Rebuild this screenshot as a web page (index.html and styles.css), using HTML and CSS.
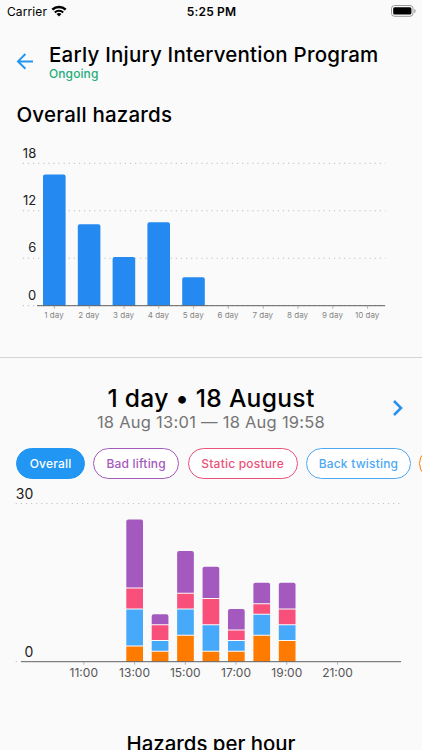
FILE: index.html
```html
<!DOCTYPE html>
<html lang="en">
<head>
    <meta charset="UTF-8">
    <meta name="viewport" content="width=device-width, initial-scale=1.0">
    <title>Early Injury Intervention Program</title>
    <link rel="stylesheet" href="styles.css">
</head>
<body>

    <!-- Status bar -->
    <div class="status-bar">
        <div class="carrier">
            <span>Carrier</span>
            <svg width="16" height="12" viewBox="0 0 16 12">
                <path d="M1.3 4.6a9.6 9.6 0 0 1 13.4 0" fill="none" stroke="#000" stroke-width="2.5"/>
                <path d="M3.8 7.4a6 6 0 0 1 8.4 0" fill="none" stroke="#000" stroke-width="2.1"/>
                <path d="M8 11.6 5.5 9.1a3.6 3.6 0 0 1 5 0z"/>
            </svg>
        </div>
        <span class="clock">5:25 PM</span>
        <svg class="battery" width="25" height="12" viewBox="0 0 25 12">
            <rect x=".5" y=".5" width="21.5" height="10.8" rx="3" fill="none" stroke="#999"/>
            <rect x="2.2" y="2.2" width="18.2" height="7.4" rx="1.5"/>
            <path d="M23.3 4v4c1-.4 1.3-1.2 1.3-2s-.3-1.6-1.3-2z" fill="#999"/>
        </svg>
    </div>

    <header class="header">
        <svg class="back" width="18" height="18" viewBox="0 0 18 18">
            <path d="M17 9.4H2.4M9.4 2 2 9.4l7.4 7.4"/>
        </svg>
        <div>
            <h1>Early Injury Intervention Program</h1>
            <p class="status">Ongoing</p>
        </div>
    </header>

    <section class="overall">
        <h2>Overall hazards</h2>
        <svg id="days-chart" class="chart" width="422" height="190" viewBox="0 0 422 190"></svg>
    </section>

    <section class="day">
        <div class="day-header">
            <div>
                <h2 class="day-title">1 day • 18 August</h2>
                <p class="day-range">18 Aug 13:01 — 18 Aug 19:58</p>
            </div>
            <svg class="next" width="12" height="18" viewBox="0 0 12 18">
                <path d="M2 2l7 7-7 7"/>
            </svg>
        </div>

        <div class="chips">
            <button class="chip chip-overall">Overall</button>
            <button class="chip chip-lifting">Bad lifting</button>
            <button class="chip chip-posture">Static posture</button>
            <button class="chip chip-twisting">Back twisting</button>
            <button class="chip chip-next"></button>
        </div>

        <svg id="hours-chart" class="chart" width="422" height="206" viewBox="0 0 422 206"></svg>
    </section>

    <h2 class="per-hour">Hazards per hour</h2>

    <script>
        const line = (x1, y1, x2, y2, cls) => `<line x1="${x1}" y1="${y1}" x2="${x2}" y2="${y2}" class="${cls}"/>`;
        const label = (x, y, text, cls) => `<text x="${x}" y="${y}" class="${cls}">${text}</text>`;

        // bar with only the top corners rounded
        const bar = (x, y, w, bottom, r, cls) =>
            `<path class="${cls}" d="M${x} ${bottom}V${y + r}q0 ${-r} ${r} ${-r}h${w - 2 * r}q${r} 0 ${r} ${r}V${bottom}z"/>`;

        function drawDays() {
            const values = [16.6, 10.3, 6.15, 10.55, 3.6];
            const base = 165.7, unit = 7.91;
            let out = "";
            [0, 6, 12, 18].forEach(v => {
                const y = base - v * unit;
                out += line(22.8, y, 385.5, y, "grid");
                out += label(36.2, y - 5.8, v, "axis-value");
            });
            values.forEach((v, i) => {
                out += bar(43 + i * 34.8, base - v * unit, 22.6, base, 2, "bar");
            });
            out += line(37, base, 385, base, "axis");
            for (let i = 0; i < 10; i++) {
                const x = 54.4 + i * 34.8;
                out += line(x, base, x, base + 3, "tick");
                out += label(x - 0.4, base + 12.4, `${i + 1} day`, "day-label");
            }
            document.getElementById("days-chart").innerHTML = out;
        }

        function drawHours() {
            // orange, blue, pink, purple
            const stacks = [
                [3, 7, 4, 13],
                [2, 2, 3, 2],
                [5, 5, 3, 8],
                [2, 5, 5, 6],
                [2, 2, 2, 4],
                [5, 4, 2, 4],
                [4, 3, 3, 5]
            ];
            const colors = ["orange", "blue", "pink", "purple"];
            const base = 182.7, unit = 5.27;
            let out = line(15.7, base - 30 * unit, 399.5, base - 30 * unit, "grid");
            out += line(15.7, base, 21, base, "grid");
            out += label(33.3, base - 30 * unit - 5, 30, "axis-value large");
            out += label(33.3, base - 5, 0, "axis-value large");
            stacks.forEach((stack, i) => {
                const x = 126.3 + i * 25.42;
                let bottom = base;
                stack.forEach((v, n) => {
                    const top = bottom - v * unit;
                    out += bar(x, top + (n < 3 ? 0.5 : 0), 16.7, bottom - (n ? 0.5 : 0), n < 3 ? 0 : 2, colors[n]);
                    bottom = top;
                });
            });
            out += line(21, base, 401, base, "axis");
            for (let i = 0; i < 6; i++) {
                const x = 83.8 + i * 50.75;
                out += line(x, base, x, base + 3, "tick");
                out += label(x, base + 14.8, `${11 + i * 2}:00`, "hour-label");
            }
            document.getElementById("hours-chart").innerHTML = out;
        }

        drawDays();
        drawHours();
    </script>
</body>
</html>
```

FILE: styles.css
```css
* {
    box-sizing: border-box;
}

body {
    margin: 0;
    height: 750px;
    overflow: hidden;
    background-color: #fafafa;
    color: #000;
    font-family: Inter, "Liberation Sans", sans-serif;
}

h1, h2, p {
    margin: 0;
    font-weight: 500;
    white-space: nowrap;
}

svg {
    display: block;
    flex: none;
}

.status-bar {
    display: grid;
    grid-template-columns: 1fr auto 1fr;
    align-items: center;
    height: 22px;
    padding: 0 6px 0 7px;
    font-size: 12px;
}

.carrier {
    display: flex;
    align-items: center;
    gap: 4px;
    letter-spacing: 0.1px;
}

.clock {
    font-weight: 600;
    letter-spacing: 0.15px;
}

.battery {
    justify-self: end;
}

.header {
    display: flex;
    gap: 15px;
    height: 78px;
    padding: 21px 0 0 16px;
}

.back {
    margin-top: 9px;
    fill: none;
    stroke: #2196f3;
    stroke-width: 2;
}

h1 {
    font-size: 20.5px;
    line-height: 24px;
    letter-spacing: 0.22px;
}

.status {
    color: #1fad7b;
    font-size: 12px;
    line-height: 14px;
    letter-spacing: 0.1px;
}

.overall {
    height: 258px;
    border-bottom: 1px solid #d4d4d4;
}

.overall h2 {
    height: 40px;
    padding-left: 16.4px;
    font-size: 20.5px;
    line-height: 29px;
    letter-spacing: 0.2px;
}

.day-header {
    display: grid;
    height: 90px;
    padding-top: 25px;
    text-align: center;
}

.day-header > * {
    grid-area: 1 / 1;
}

.day-title {
    font-size: 24.6px;
    line-height: 30px;
    letter-spacing: 0.3px;
}

.day-range {
    color: #757575;
    font-size: 16.5px;
    font-weight: 400;
    line-height: 18px;
    letter-spacing: 0.25px;
}

.next {
    justify-self: end;
    margin: 16px 18px 0 0;
    fill: none;
    stroke: #2990ec;
    stroke-width: 2.6;
}

.chips {
    display: flex;
    gap: 8.2px;
    padding-left: 16.4px;
    overflow: hidden;
}

.chip {
    flex: none;
    height: 31px;
    padding: 0;
    border: 1px solid;
    border-radius: 16px;
    background-color: #fff;
    font: 500 12px Inter, "Liberation Sans", sans-serif;
    letter-spacing: 0.2px;
}

.chip-overall {
    width: 68.4px;
    border-color: #2196f3;
    background-color: #2196f3;
    color: #fff;
}

.chip-lifting {
    width: 86.5px;
    color: #a45abb;
}

.chip-posture {
    width: 110px;
    color: #eb5279;
}

.chip-twisting {
    width: 105.2px;
    color: #4ea8f1;
}

.chip-next {
    width: 100px;
    border-color: #ff7a00;
}

.chart text {
    fill: #212121;
}

.grid {
    stroke: #bdbdbd;
    stroke-dasharray: 1.2 3.9;
}

.axis {
    stroke: #616161;
}

.tick {
    stroke: #9e9e9e;
    stroke-width: 0.8;
}

.axis-value {
    font-size: 13px;
    text-anchor: end;
}

.axis-value.large {
    font-size: 14px;
}

.chart .day-label {
    fill: #858585;
    font-size: 8px;
    text-anchor: middle;
}

.chart .hour-label {
    fill: #555;
    font-size: 12px;
    text-anchor: middle;
}

.bar {
    fill: #2489f1;
}

.orange {
    fill: #ff7b00;
}

.blue {
    fill: #47a9fa;
}

.pink {
    fill: #f94f7b;
}

.purple {
    fill: #a359bd;
}

.per-hour {
    margin-top: 45px;
    font-size: 20.4px;
    line-height: 28px;
    text-align: center;
}
```
